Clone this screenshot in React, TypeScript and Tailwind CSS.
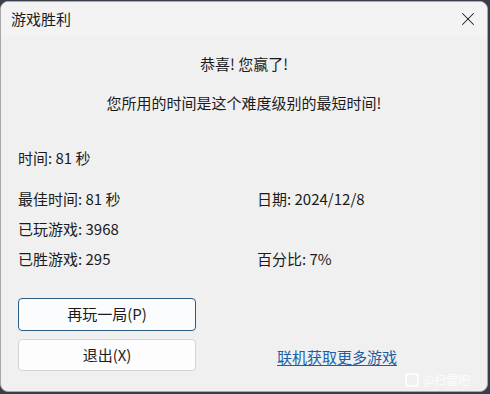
import { X } from 'lucide-react'

const font = { fontFamily: '"Noto Sans CJK SC", "Segoe UI", sans-serif' }

const StatLine = ({ label, value }: { label: string; value: string }) => (
  <div className="h-[30px] leading-[30px]">
    {label}: {value}
  </div>
)

export default function App() {
  return (
    <div className="h-[394px] w-[490px] bg-[#3b3d48] pb-[2px] pr-[2px] pt-[1px]">
      <div
        className="flex h-full w-full flex-col overflow-hidden rounded-lg border border-[#a8a8a8] bg-[#f0f0f0] text-[15px] text-[#1b1b1b]"
        style={font}
      >
        {/* Title bar */}
        <div className="flex h-[34px] shrink-0 items-center justify-between bg-[#f3f3f3] pl-[10px] pr-[8px]">
          <span className="text-[15px]">游戏胜利</span>
          <X size={22} strokeWidth={1.1} className="text-[#1b1b1b]" />
        </div>

        {/* Body */}
        <div className="flex flex-1 flex-col px-[17px]">
          <div className="mt-[17px] text-center leading-[22px]">恭喜! 您赢了!</div>
          <div className="mt-[17px] text-center leading-[22px]">
            您所用的时间是这个难度级别的最短时间!
          </div>

          <div className="mt-[33px] leading-[22px]">时间: 81 秒</div>

          <div className="mt-[15px] grid grid-cols-[239px_1fr]">
            <StatLine label="最佳时间" value="81 秒" />
            <StatLine label="日期" value="2024/12/8" />
            <StatLine label="已玩游戏" value="3968" />
            <div />
            <StatLine label="已胜游戏" value="295" />
            <StatLine label="百分比" value="7%" />
          </div>

          <div className="mt-[24px] flex items-end">
            <div className="flex w-[178px] flex-col gap-[8px]">
              <button className="h-[33px] rounded-[4px] border border-[#2d5c82] bg-[#fafcfe] text-[15px]">
                再玩一局(P)
              </button>
              <button className="h-[32px] rounded-[4px] border border-[#d4d4d4] bg-[#fdfdfd] text-[15px]">
                退出(X)
              </button>
            </div>
            <a className="mb-[3px] ml-[81px] text-[15px] text-[#1a5fa8] underline underline-offset-2">
              联机获取更多游戏
            </a>
          </div>

          <div className="mt-auto mb-[3px] flex justify-end text-[12px] text-white/80">
            <span className="flex items-center gap-1">
              <span className="inline-block h-[14px] w-[14px] rounded-[3px] border-2 border-white/80" />
              @扫雷吧
            </span>
          </div>
        </div>
      </div>
    </div>
  )
}
